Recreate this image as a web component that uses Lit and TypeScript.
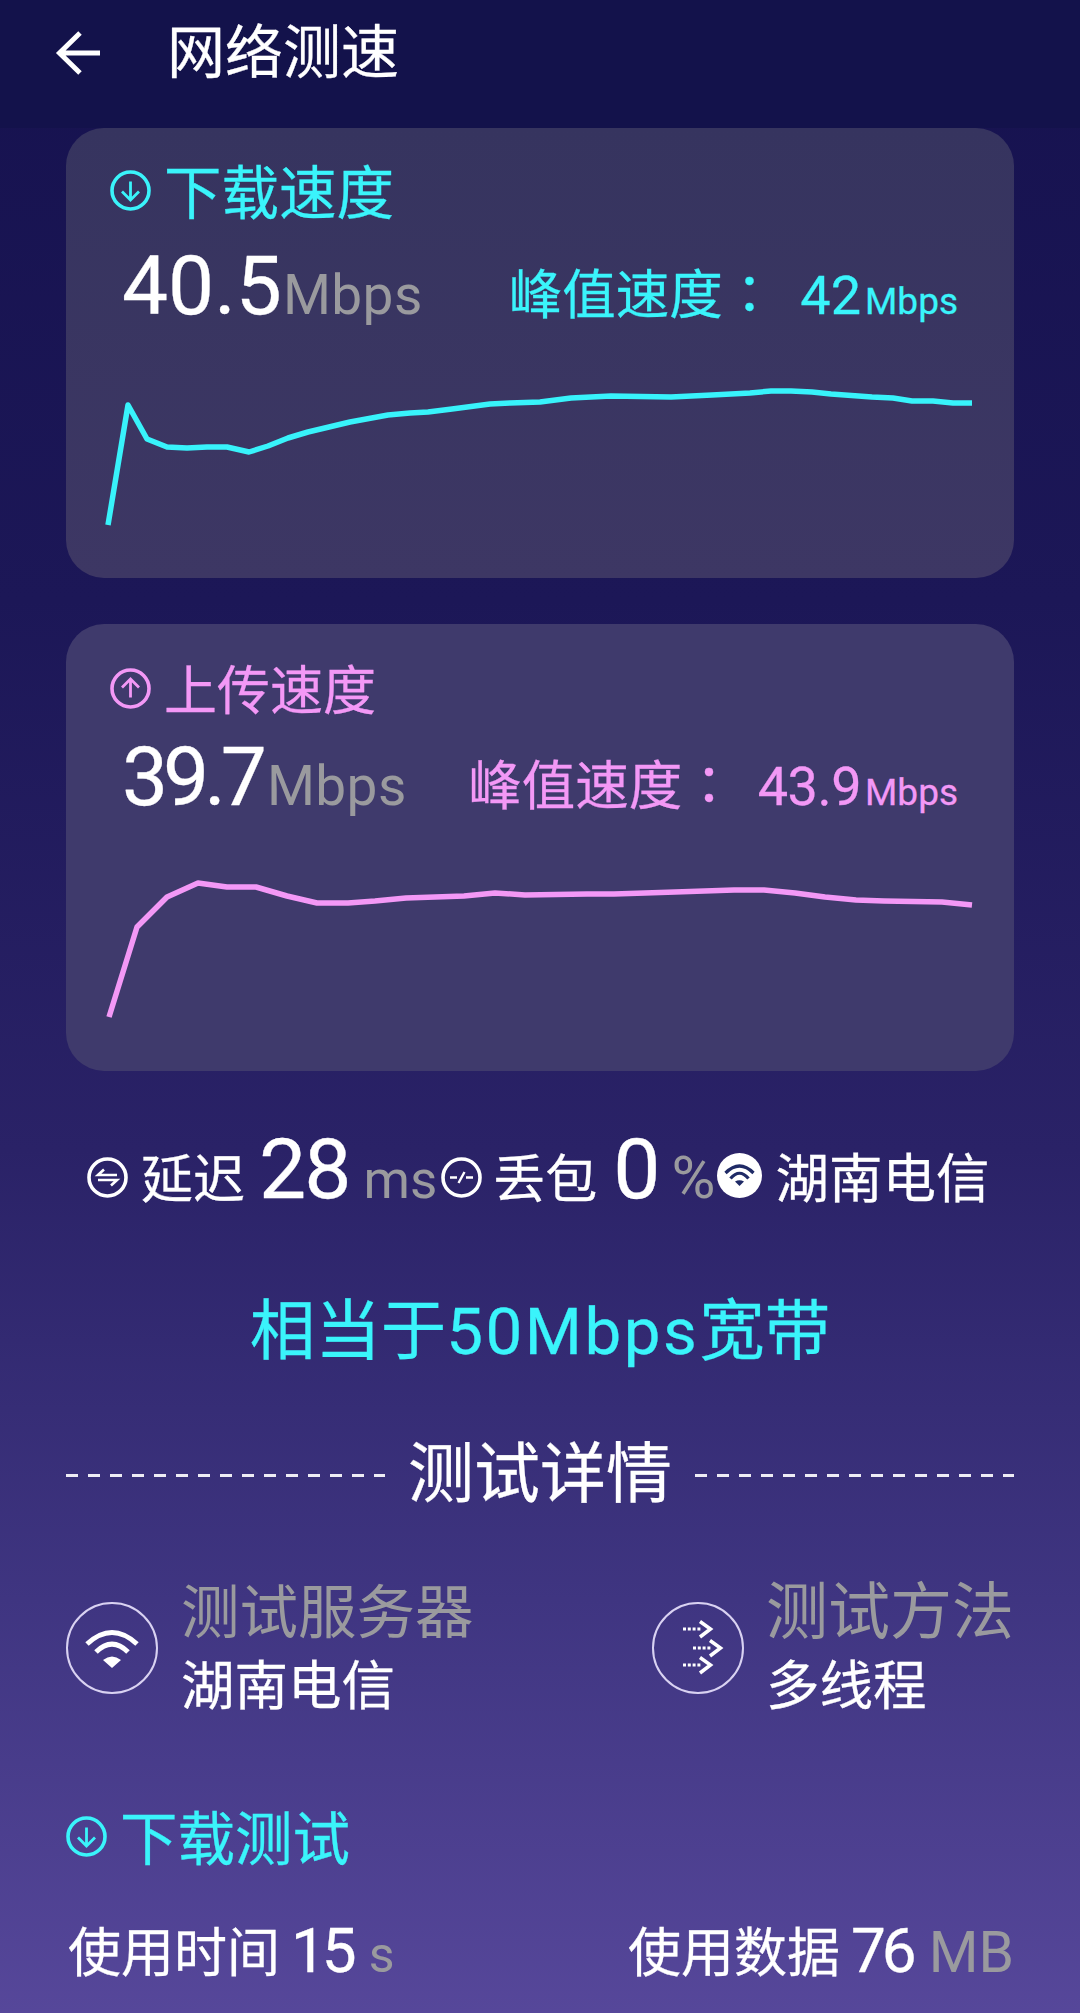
import { LitElement, html, css, svg } from "lit";
import { customElement } from "lit/decorators.js";

const DOWN: number[][] = [[108,525],[128,405],[147,439],[167,447],[187,448],[207,447],[227,447],[249,452],[268,446],[288,438],[308,432],[329,427],[350,422],[388,415],[410,413],[428,412],[452,409],[490,404],[510,403],[540,402],[571,398],[611,396],[671,397],[712,395],[750,393],[771,391],[791,391],[812,392],[831,394],[872,397],[893,398],[912,401],[933,401],[953,403],[972,403]];
const UP: number[][] = [[109,1017],[137,927],[167,897],[198,883],[227,887],[256,887],[287,896],[317,903],[348,903],[375,901],[406,898],[464,896],[495,893],[525,895],[587,894],[614,894],[645,893],[675,892],[734,890],[764,890],[795,893],[825,897],[856,900],[884,901],[942,902],[972,905]];

const pts = (p: number[][]) => p.map((q) => q.join(",")).join(" ");

const arrowIcon = (dir: "down" | "up") => html`<svg class="ci" viewBox="0 0 41 41" fill="none" stroke="currentColor">
  <circle cx="20.5" cy="20.5" r="18.5" stroke-width="3.6"></circle>
  ${dir === "down"
    ? svg`<path d="M20.5 11.500V30M12 21.500L20.5 30L29 21.500" stroke-width="2.8"></path>`
    : svg`<path d="M20.5 29.500V11M12 19.500L20.5 11L29 19.500" stroke-width="2.8"></path>`}
</svg>`;

@customElement("app-root")
export class AppRoot extends LitElement {
  static styles = css`
    :host {
      display: block;
      width: 1080px;
      height: 2013px;
      overflow: hidden;
      color: #fff;
      font-family: "Roboto", "Noto Sans CJK SC", sans-serif;
      -webkit-text-stroke: 0.3px currentColor;
      background: linear-gradient(180deg, #16124f 0px, #1c1757 600px, #2a2267 1150px, #3f3581 1600px, #56479a 2013px);
    }
    .bar {
      height: 128px;
      background: #13124b;
      display: flex;
      align-items: center;
      padding-left: 54px;
      box-sizing: border-box;
      font-size: 58px;
      line-height: 100px;
      padding-bottom: 23px;
    }
    .bar svg { width: 50px; height: 50px; margin-right: 63px; }
    .card {
      margin: 0 66px;
      border-radius: 38px;
      box-sizing: border-box;
      padding-top: 26px;
    }
    .card.a { height: 450px; color: #3af4fb; background: linear-gradient(180deg, #36345f, #3d3764); }
    .card.b { height: 447px; margin-top: 46px; color: #f398f6; padding-top: 28px; background: #3f3a6c; }
    .chead { display: flex; align-items: center; gap: 13px; padding-left: 44px; height: 70px; }
    .a .chead { font-size: 57.5px; }
    .b .chead { font-size: 53px; }
    .ci { width: 41px; height: 41px; flex: none; margin-top: 2px; }
    .vals {
      display: flex;
      align-items: baseline;
      justify-content: space-between;
      padding: 0 56px;
      height: 84px;
      line-height: 84px;
    }
    .a .vals { margin-top: 20px; }
    .b .vals { margin-top: 13px; }
    .big { color: #fff; -webkit-text-stroke-color: #fff; font-size: 82px; }
    .b .big { letter-spacing: -5px; }
    .big .unit { margin-left: 1px; }
    .b .big .unit { margin-left: 5px; }
    .big .unit, .stats .u, .use .u, .it .t { -webkit-text-stroke-width: 0; }
    .unit { color: #9a9a9e; font-size: 55px; letter-spacing: 0.4px; }
    .peak { font-size: 53.5px; white-space: nowrap; }
    .peak u { text-decoration: none; font-family: "Noto Sans CJK TC", sans-serif; margin-right: 24px; }
    .b .peak u { margin-right: 22px; }
    .peak b { font-weight: 400; font-size: 54px; }
    .b .peak b { letter-spacing: -0.5px; }
    .peak i { font-style: normal; font-size: 37px; margin-left: 4px; }
    .chart { display: block; width: 948px; height: 210px; }
    .a .chart { margin-top: 40px; }
    .b .chart { margin-top: 42px; }
    .stats {
      display: flex;
      align-items: baseline;
      margin: 0 0 0 87px;
      height: 84px;
      line-height: 84px;
      padding-top: 57px;
      font-size: 52px;
    }
    .stats svg { width: 41px; height: 41px; margin-right: 13px; flex: none; }
    .stats svg.second { margin-left: 4px; margin-right: 11px; }
    .stats .n { font-size: 84px; letter-spacing: -2px; margin: 0 14px 0 14px; }
    .stats .n.z { letter-spacing: 0; margin: 0 11px 0 16px; }
    .stats .u { color: #9a9a9e; font-size: 53px; }
    .stats .pct { font-size: 60px; margin-right: 2px; }
    .stats svg.wf { width: 45px; height: 45px; margin-right: 13px; }
    .stats .op { font-size: 53.5px; }
    .equiv {
      text-align: center;
      color: #3af4fb;
      font-size: 65.5px;
      line-height: 90px;
      margin-top: 75px;
    }
    .equiv span { letter-spacing: 2.5px; }
    .sep {
      display: flex;
      align-items: center;
      margin: 53px 66px 0;
      font-size: 66px;
      line-height: 90px;
      height: 90px;
      gap: 23px;
    }
    .sep i { flex: 1; height: 3px; background: repeating-linear-gradient(90deg, #eeecf5 0 12px, transparent 12px 22px); }
    .info { display: flex; justify-content: space-between; margin: 52px 66px 0; align-items: center; }
    .it { display: flex; align-items: center; gap: 23px; }
    .it .ring { width: 92px; height: 92px; flex: none; }
    .it .m { display: flex; flex-direction: column; padding-top: 4px; }
    .it .t { color: #9a9a9e; font-size: 58.5px; line-height: 74px; white-space: nowrap; }
    .it .t.w { font-size: 62px; }
    .it .v { font-size: 53.5px; line-height: 74px; white-space: nowrap; }
    .it.r { gap: 22px; }
    .dl { display: flex; align-items: center; gap: 13px; margin: 76px 66px 0; color: #3af4fb; font-size: 57.5px; height: 70px; }
    .use { display: flex; justify-content: space-between; align-items: baseline; margin: 41px 66px 0 68px; font-size: 53px; line-height: 80px; white-space: nowrap; }
    .use .n { font-size: 62px; letter-spacing: -4px; margin: 0 16px 0 11px; }
    .use .u { color: #9a9a9e; font-size: 57px; }
    .use .u.sm { font-size: 50px; }
  `;

  render() {
    return html`
      <div class="bar">
        <svg viewBox="0 0 50 50" fill="none" stroke="#fff" stroke-width="5"><path d="M46 25H6M26 5L5.5 25L26 45"></path></svg>
        <span>网络测速</span>
      </div>

      <section class="card a">
        <div class="chead">${arrowIcon("down")}<span>下载速度</span></div>
        <div class="vals">
          <span class="big">40.5<span class="unit">Mbps</span></span>
          <span class="peak">峰值速度<u>：</u><b>42</b><i>Mbps</i></span>
        </div>
        <svg class="chart" viewBox="66 368 948 210" fill="none" stroke="#38f3fb" stroke-width="5.500" stroke-linejoin="round">
          <polyline points=${pts(DOWN)}></polyline>
        </svg>
      </section>

      <section class="card b">
        <div class="chead">${arrowIcon("up")}<span>上传速度</span></div>
        <div class="vals">
          <span class="big">39.7<span class="unit">Mbps</span></span>
          <span class="peak">峰值速度<u>：</u><b>43.9</b><i>Mbps</i></span>
        </div>
        <svg class="chart" viewBox="66 861 948 210" fill="none" stroke="#f398f6" stroke-width="5.500" stroke-linejoin="round">
          <polyline points=${pts(UP)}></polyline>
        </svg>
      </section>

      <div class="stats">
        <svg viewBox="0 0 41 41" fill="none" stroke="#fff"><circle cx="20.5" cy="20.5" r="18.5" stroke-width="3.6"></circle><path d="M30 18H11L17 12.500M11 23H30L24 28.500" stroke-width="2.6"></path></svg>
        <span>延迟</span><span class="n">28</span><span class="u">ms</span>
        <svg class="second" viewBox="0 0 41 41" fill="none" stroke="#fff"><circle cx="20.5" cy="20.5" r="18.5" stroke-width="3.6"></circle><path d="M9 20.500H16M25 20.500H32M17.500 26L23.500 15" stroke-width="2.400"></path></svg>
        <span>丢包</span><span class="n z">0</span><span class="u pct">%</span>
        <svg class="wf" viewBox="0 0 45 45"><circle cx="22.500" cy="22.500" r="22.500" fill="#fff"></circle><path d="M8.500 20Q22.500 6 36.500 20M13.500 25.500Q22.500 15 31.500 25.500" fill="none" stroke="#1f2a66" stroke-width="3.200"></path><path d="M18 28.500Q22.500 26 27 28.500L22.500 33Z" fill="#1f2a66"></path></svg>
        <span class="op">湖南电信</span>
      </div>

      <div class="equiv">相当于<span>50Mbps</span>宽带</div>

      <div class="sep"><i></i><span>测试详情</span><i></i></div>

      <div class="info">
        <div class="it">
          <svg class="ring" viewBox="0 0 92 92" fill="none"><circle cx="46" cy="46" r="45" stroke="#d9d2f2" stroke-width="2"></circle><path d="M21 42Q46 19 71 42M30 50Q46 34 62 50" stroke="#fff" stroke-width="5"></path><path d="M37 58Q46 51 55 58L46 66Z" fill="#fff"></path></svg>
          <div class="m"><span class="t">测试服务器</span><span class="v">湖南电信</span></div>
        </div>
        <div class="it r">
          <svg class="ring" viewBox="0 0 92 92" fill="none"><circle cx="46" cy="46" r="45" stroke="#d9d2f2" stroke-width="2"></circle><g stroke="#fff"><path d="M31 27H50M41 46H60M31 63H50" stroke-width="3" stroke-dasharray="3 1.800"></path><path d="M48 19.500L58.500 27L48 35M58 38.500L68.500 46L58 54M48 55.500L58.500 63L48 71" stroke-width="3.500"></path></g></svg>
          <div class="m"><span class="t w">测试方法</span><span class="v">多线程</span></div>
        </div>
      </div>

      <div class="dl">${arrowIcon("down")}<span>下载测试</span></div>

      <div class="use">
        <span>使用时间<span class="n">15</span><span class="u sm">s</span></span>
        <span>使用数据<span class="n">76</span><span class="u">MB</span></span>
      </div>
    `;
  }
}
